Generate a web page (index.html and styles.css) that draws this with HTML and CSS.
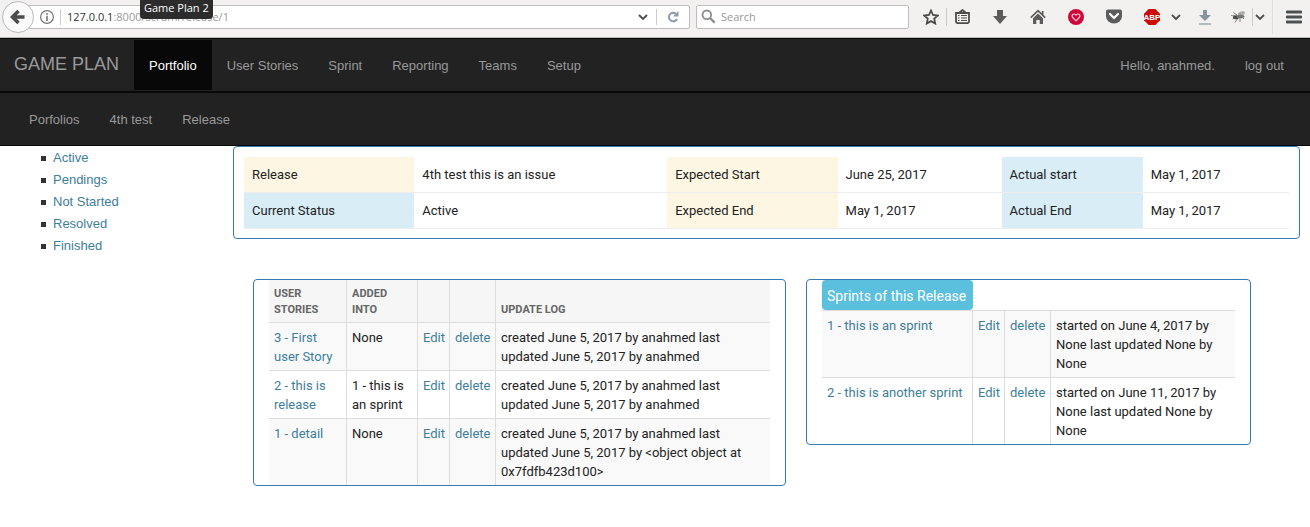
FILE: index.html
```html
<!DOCTYPE html>
<html lang="en">
<head>
<meta charset="utf-8">
<title>Game Plan 2</title>
<link rel="stylesheet" href="styles.css">
</head>
<body>
<div class="toolbar">
  <button class="back" aria-label="Back"><svg width="16" height="16" viewBox="0 0 16 16"><path d="M8.5 2 2.5 8l6 6M3 8h11.5" fill="none" stroke="#4c4c4c" stroke-width="3.6"/></svg></button>
  <div class="urlbar">
    <button class="info" aria-label="Site information"><svg width="16" height="16" viewBox="0 0 16 16"><circle cx="8" cy="8" r="6.4" fill="none" stroke="#777" stroke-width="1.2"/><path d="M7.2 4h1.6v1.7H7.2zM7.2 6.8h1.6V12H7.2z" fill="#777"/></svg></button>
    <label class="address"><span>127.0.0.1</span><input type="text" aria-label="Address" value=":8000/scrum/release/1"></label>
    <button class="drop" aria-label="Show history"><svg width="10" height="8" viewBox="0 0 10 8"><path d="m1 2 4 4 4-4" fill="none" stroke="#4c4c4c" stroke-width="1.8"/></svg></button>
    <button class="reload" aria-label="Reload"><svg width="12" height="12" viewBox="0 0 12 12"><path d="M9 2.8A4.3 4.3 0 1 0 10 8" fill="none" stroke="#8b9bab" stroke-width="2"/><path d="M11.5 0v5.5H6z" fill="#8b9bab"/></svg></button>
  </div>
  <label class="search">
    <svg width="15" height="15" viewBox="0 0 15 15"><circle cx="5.8" cy="5.8" r="4.3" fill="none" stroke="#8d8d8d" stroke-width="1.8"/><path d="m9 9 4.6 4.6" stroke="#8d8d8d" stroke-width="2.4"/></svg>
    <input type="text" placeholder="Search" aria-label="Search">
  </label>
  <div class="tools">
    <button class="tool star" aria-label="Bookmark"><svg width="16" height="16" viewBox="0 0 16 16"><path d="m8 1.5 2 4.5 4.8.5-3.6 3.2 1 4.8L8 12.1l-4.2 2.4 1-4.8L1.2 6.5 6 6z" fill="none" stroke="#4c4c4c" stroke-width="1.8"/></svg></button>
    <span class="rule"></span>
    <button class="tool list" aria-label="Bookmarks"><svg width="15" height="16" viewBox="0 0 15 16"><path d="m4.500 3.500 3-2.500 3 2.500M1 4h13v9l-1.200 1.200H2.200L1 13z" fill="none" stroke="#4c4c4c" stroke-width="1.8"/><path d="M3 6.500h1.500M3 9h1.500M3 11.500h1.500M6 6.500h6M6 9h6M6 11.500h6" stroke="#4c4c4c" stroke-width="1.2"/></svg></button>
    <button class="tool" aria-label="Downloads"><svg width="16" height="16" viewBox="0 0 16 16"><path d="M5 1h6v6h4l-7 8-7-8h4z" fill="#5c5c5c"/></svg></button>
    <button class="tool" aria-label="Home"><svg width="16" height="16" viewBox="0 0 16 16"><path d="m.8 8.600 7.200-7 7.200 7M12.700 2v4" fill="none" stroke="#5c5c5c" stroke-width="1.6"/><path d="m8 4.500 5 4.800V15H9.700v-4H6.300v4H3V9.300z" fill="#5c5c5c"/></svg></button>
    <button class="tool" aria-label="Favourites"><svg width="16" height="16" viewBox="0 0 16 16"><circle cx="8" cy="8" r="8" fill="#d0073a"/><path d="M8 11.800 4.700 8.500C2.800 6.500 5.800 3.300 8 6.100c2.200-2.800 5.200.4 3.300 2.400z" fill="none" stroke="#f7c6d2" stroke-width="1.2"/></svg></button>
    <button class="tool" aria-label="Pocket"><svg width="16" height="15" viewBox="0 0 16 15"><path d="M2 .5h12q2 0 2 2V7A8 7.500 0 0 1 0 7V2.500q0-2 2-2z" fill="#5c5c5c"/><path d="m4 5 4 4 4-4" fill="none" stroke="#fff" stroke-width="2.2" stroke-linecap="round"/></svg></button>
    <button class="tool" aria-label="Adblock Plus"><svg width="16" height="16" viewBox="0 0 16 16"><path d="M4.700 0h6.600L16 4.700v6.600L11.300 16H4.700L0 11.300V4.700z" fill="#cc0a05"/><text class="abp" x="8" y="11" text-anchor="middle">ABP</text></svg></button>
    <button class="tool more" aria-label="Adblock options"><svg width="10" height="8" viewBox="0 0 10 8"><path d="m1 2 4 4 4-4" fill="none" stroke="#4c4c4c" stroke-width="1.8"/></svg></button>
    <button class="tool save" aria-label="Save"><svg width="14" height="16" viewBox="0 0 14 16"><path d="M5 1h4v5h4l-6 6-6-6h4z" fill="#85979c"/><path d="M1 15h12" stroke="#85979c" stroke-width="1.2"/></svg></button>
    <button class="tool bug" aria-label="Firebug"><svg width="16" height="14" viewBox="0 0 16 14"><path d="M5 6 1 5.500M7 5 3.500 2.500M8 8l-3 4.500M10 8v4M12 7l2 2M5 7.500l-2.500 1.800M11 5 8 3.500" stroke="#888" stroke-width="1"/><ellipse cx="6" cy="7.300" rx="3" ry="2" fill="#4c4c4c"/><ellipse cx="11.500" cy="3.500" rx="3.500" ry="2" transform="rotate(-20 11.500 3.500)" fill="#aaa"/><ellipse cx="10.500" cy="6.500" rx="4" ry="1.800" fill="#777"/></svg></button>
    <span class="rule"></span>
    <button class="tool arrow" aria-label="Firebug options"><svg width="10" height="8" viewBox="0 0 10 8"><path d="m1 2 4 4 4-4" fill="none" stroke="#4c4c4c" stroke-width="1.8"/></svg></button>
    <span class="rule tall"></span>
    <button class="tool menu" aria-label="Menu"><svg width="16" height="14" viewBox="0 0 16 14"><path d="M1 2h14M1 7h14M1 12h14" stroke="#4c5050" stroke-width="2.8" stroke-linecap="round"/></svg></button>
  </div>
  <div class="tooltip" role="tooltip">Game Plan 2</div>
</div>

<nav class="navbar">
  <a class="brand" href="#">GAME PLAN</a>
  <a class="item active" href="#">Portfolio</a>
  <a class="item" href="#">User Stories</a>
  <a class="item" href="#">Sprint</a>
  <a class="item" href="#">Reporting</a>
  <a class="item" href="#">Teams</a>
  <a class="item" href="#">Setup</a>
  <a class="item user" href="#">Hello, anahmed.</a>
  <a class="item" href="#">log out</a>
</nav>
<nav class="navbar crumbs">
  <a class="item" href="#">Porfolios</a>
  <a class="item" href="#">4th test</a>
  <a class="item" href="#">Release</a>
</nav>

<div class="page">
  <ul class="side">
    <li><a href="#">Active</a></li>
    <li><a href="#">Pendings</a></li>
    <li><a href="#">Not Started</a></li>
    <li><a href="#">Resolved</a></li>
    <li><a href="#">Finished</a></li>
  </ul>
  <main class="main">
    <section class="panel summary">
      <table class="facts">
        <colgroup><col class="f1"><col class="f2"><col class="f1"><col class="f3"><col class="f4"><col class="f5"></colgroup>
        <tr><th class="cream" scope="row">Release</th><td>4th test this is an issue</td><th class="cream" scope="row">Expected Start</th><td>June 25, 2017</td><th class="sky" scope="row">Actual start</th><td>May 1, 2017</td></tr>
        <tr><th class="sky" scope="row">Current Status</th><td>Active</td><th class="cream" scope="row">Expected End</th><td>May 1, 2017</td><th class="sky" scope="row">Actual End</th><td>May 1, 2017</td></tr>
      </table>
    </section>
    <div class="lists">
      <section class="panel">
        <table class="grid">
          <colgroup><col class="story"><col class="into"><col class="edit"><col class="del"><col></colgroup>
          <thead><tr><th>User Stories</th><th>Added into</th><th></th><th></th><th>Update log</th></tr></thead>
          <tbody>
            <tr><td><a href="#">3 - First user Story</a></td><td>None</td><td><a href="#">Edit</a></td><td><a href="#">delete</a></td><td>created June 5, 2017 by anahmed last updated June 5, 2017 by anahmed</td></tr>
            <tr><td><a href="#">2 - this is release</a></td><td>1 - this is an sprint</td><td><a href="#">Edit</a></td><td><a href="#">delete</a></td><td>created June 5, 2017 by anahmed last updated June 5, 2017 by anahmed</td></tr>
            <tr><td><a href="#">1 - detail</a></td><td>None</td><td><a href="#">Edit</a></td><td><a href="#">delete</a></td><td>created June 5, 2017 by anahmed last updated June 5, 2017 by &lt;object object at 0x7fdfb423d100&gt;</td></tr>
          </tbody>
        </table>
      </section>
      <section class="panel">
        <h2 class="tag">Sprints of this Release</h2>
        <table class="grid">
          <colgroup><col class="sprint"><col class="edit"><col class="del"><col></colgroup>
          <tbody>
            <tr><td><a href="#">1 - this is an sprint</a></td><td><a href="#">Edit</a></td><td><a href="#">delete</a></td><td>started on June 4, 2017 by None last updated None by None</td></tr>
            <tr><td><a href="#">2 - this is another sprint</a></td><td><a href="#">Edit</a></td><td><a href="#">delete</a></td><td>started on June 11, 2017 by None last updated None by None</td></tr>
          </tbody>
        </table>
      </section>
    </div>
  </main>
</div>
</body>
</html>
```
FILE: styles.css
```css
* { box-sizing: border-box; }
body { margin: 0; background: #fff; color: #222; font: 13px/19px Roboto, sans-serif; }
a { color: #3d7e9a; text-decoration: none; }
button { border: 0; background: none; padding: 0; margin: 0; display: flex; align-items: center; justify-content: center; }
input { border: 0; outline: 0; padding: 0; background: none; font: inherit; min-width: 0; flex: 1; }
svg { display: block; flex: none; }

/* browser toolbar */
.toolbar { position: relative; display: flex; height: 38px; padding: 0 0 4px 2px; align-items: center; background: #f2f1f0; border-bottom: 1px solid #bdbbb8; font: 11px/16px "Open Sans", sans-serif; }
.back { width: 32px; height: 32px; flex: none; border: 1px solid #bbb; border-radius: 50%; background: #fafafa; z-index: 1; }
.urlbar { display: flex; flex: 1; height: 24px; margin-left: -8px; padding-left: 7px; background: #fff; border: 1px solid #c0bebc; border-radius: 2px; }
.info { width: 27px; border-right: 1px solid #ccc; margin: 3px 0; }
.address { display: flex; flex: 1; align-items: center; padding-left: 6px; color: #333; }
.address input { color: #999; }
.drop { width: 26px; }
.reload { width: 33px; margin: 3px 0; border-left: 1px solid #ccc; }
.search { display: flex; align-items: center; gap: 5px; width: 213px; height: 24px; margin-left: 6px; padding: 0 4px; background: #fff; border: 1px solid #c0bebc; border-radius: 2px; }
.search input::placeholder { color: #999; opacity: 1; }
.tools { display: flex; align-items: center; }
.tool { width: 38px; height: 24px; }
.star { width: 31px; margin-left: 6px; }
.list { width: 30px; margin-right: 4px; }
.more { width: 10px; margin-right: 5px; }
.bug { width: 28px; }
.arrow { width: 13px; margin-right: 6px; }
.menu { width: 32px; margin-left: 5px; }
.rule { width: 1px; height: 18px; background: #ccc; }
.tall { height: 34px; background: #ddd; }
.abp { font: bold 8px "Liberation Sans", sans-serif; fill: #fff; }
.tooltip { position: absolute; left: 140px; top: 0; height: 19px; padding: 0 4px; border-radius: 0 0 4px 4px; background: #2c2c2c; color: #fff; z-index: 2; }

/* navigation */
.navbar { display: flex; flex-wrap: wrap; min-height: 54px; padding: 1px 11px 1px 14px; background: #222; border-top: 1px solid #080808; border-bottom: 1px solid #080808; font: 13px/20px "Liberation Sans", sans-serif; }
.brand { padding: 14px 15px 16px 0; font-size: 18px; color: #999; }
.item { padding: 16px 15px 14px; color: #999; }
.active { background: #080808; color: #fff; }
.user { margin-left: auto; }

.page { display: flex; }
.side { width: 233px; flex: none; margin: 0; padding: 1px 0 0 41px; list-style: none; font: 13px/22px "Liberation Sans", sans-serif; }
.side li { display: flex; align-items: center; gap: 7px; }
.side li::before { content: ""; width: 5px; height: 5px; background: #333; }
.main { flex: 1; min-width: 0; padding-right: 10px; }
.panel { border: 1px solid #337ab7; border-radius: 4px; }

/* release summary */
.summary { padding: 10px 10px 9px; }
table { width: 100%; table-layout: fixed; border-collapse: separate; border-spacing: 0; }
.facts th, .facts td { padding: 8px; text-align: left; font-weight: 400; border-bottom: 1px solid #eee; }
.f1 { width: 16.3%; }
.f2 { width: 24.2%; }
.f3 { width: 15.7%; }
.f4 { width: 13.5%; }
.f5 { width: 14%; }
.cream { background: #fdf6e3; }
.sky { background: #d9edf7; }

/* stories and sprints */
.lists { display: grid; grid-template-columns: 533fr 445fr; gap: 20px; align-items: start; padding: 40px 49px 0 20px; }
.lists .panel { padding: 0 15px; }
.grid td { padding: 5px 5px 4px; vertical-align: top; border-top: 1px solid #ddd; }
.grid th { padding: 6px 5px 4px; vertical-align: bottom; text-align: left; font-size: 11px; line-height: 16px; text-transform: uppercase; color: #666; background: #f6f6f6; }
.grid th + th, .grid td + td { border-left: 1px solid #ddd; }
.grid tbody tr:nth-child(odd) { background: #f9f9f9; }
.story { width: 77px; }
.into { width: 71px; }
.edit { width: 32px; }
.del { width: 46px; }
.sprint { width: 150px; }
.tag { width: fit-content; margin: 0; padding: 6px 7px 4px 5px; border-radius: 4px; background: #5bc0de; color: #fff; font-size: 14px; line-height: 20px; font-weight: 400; }
```
